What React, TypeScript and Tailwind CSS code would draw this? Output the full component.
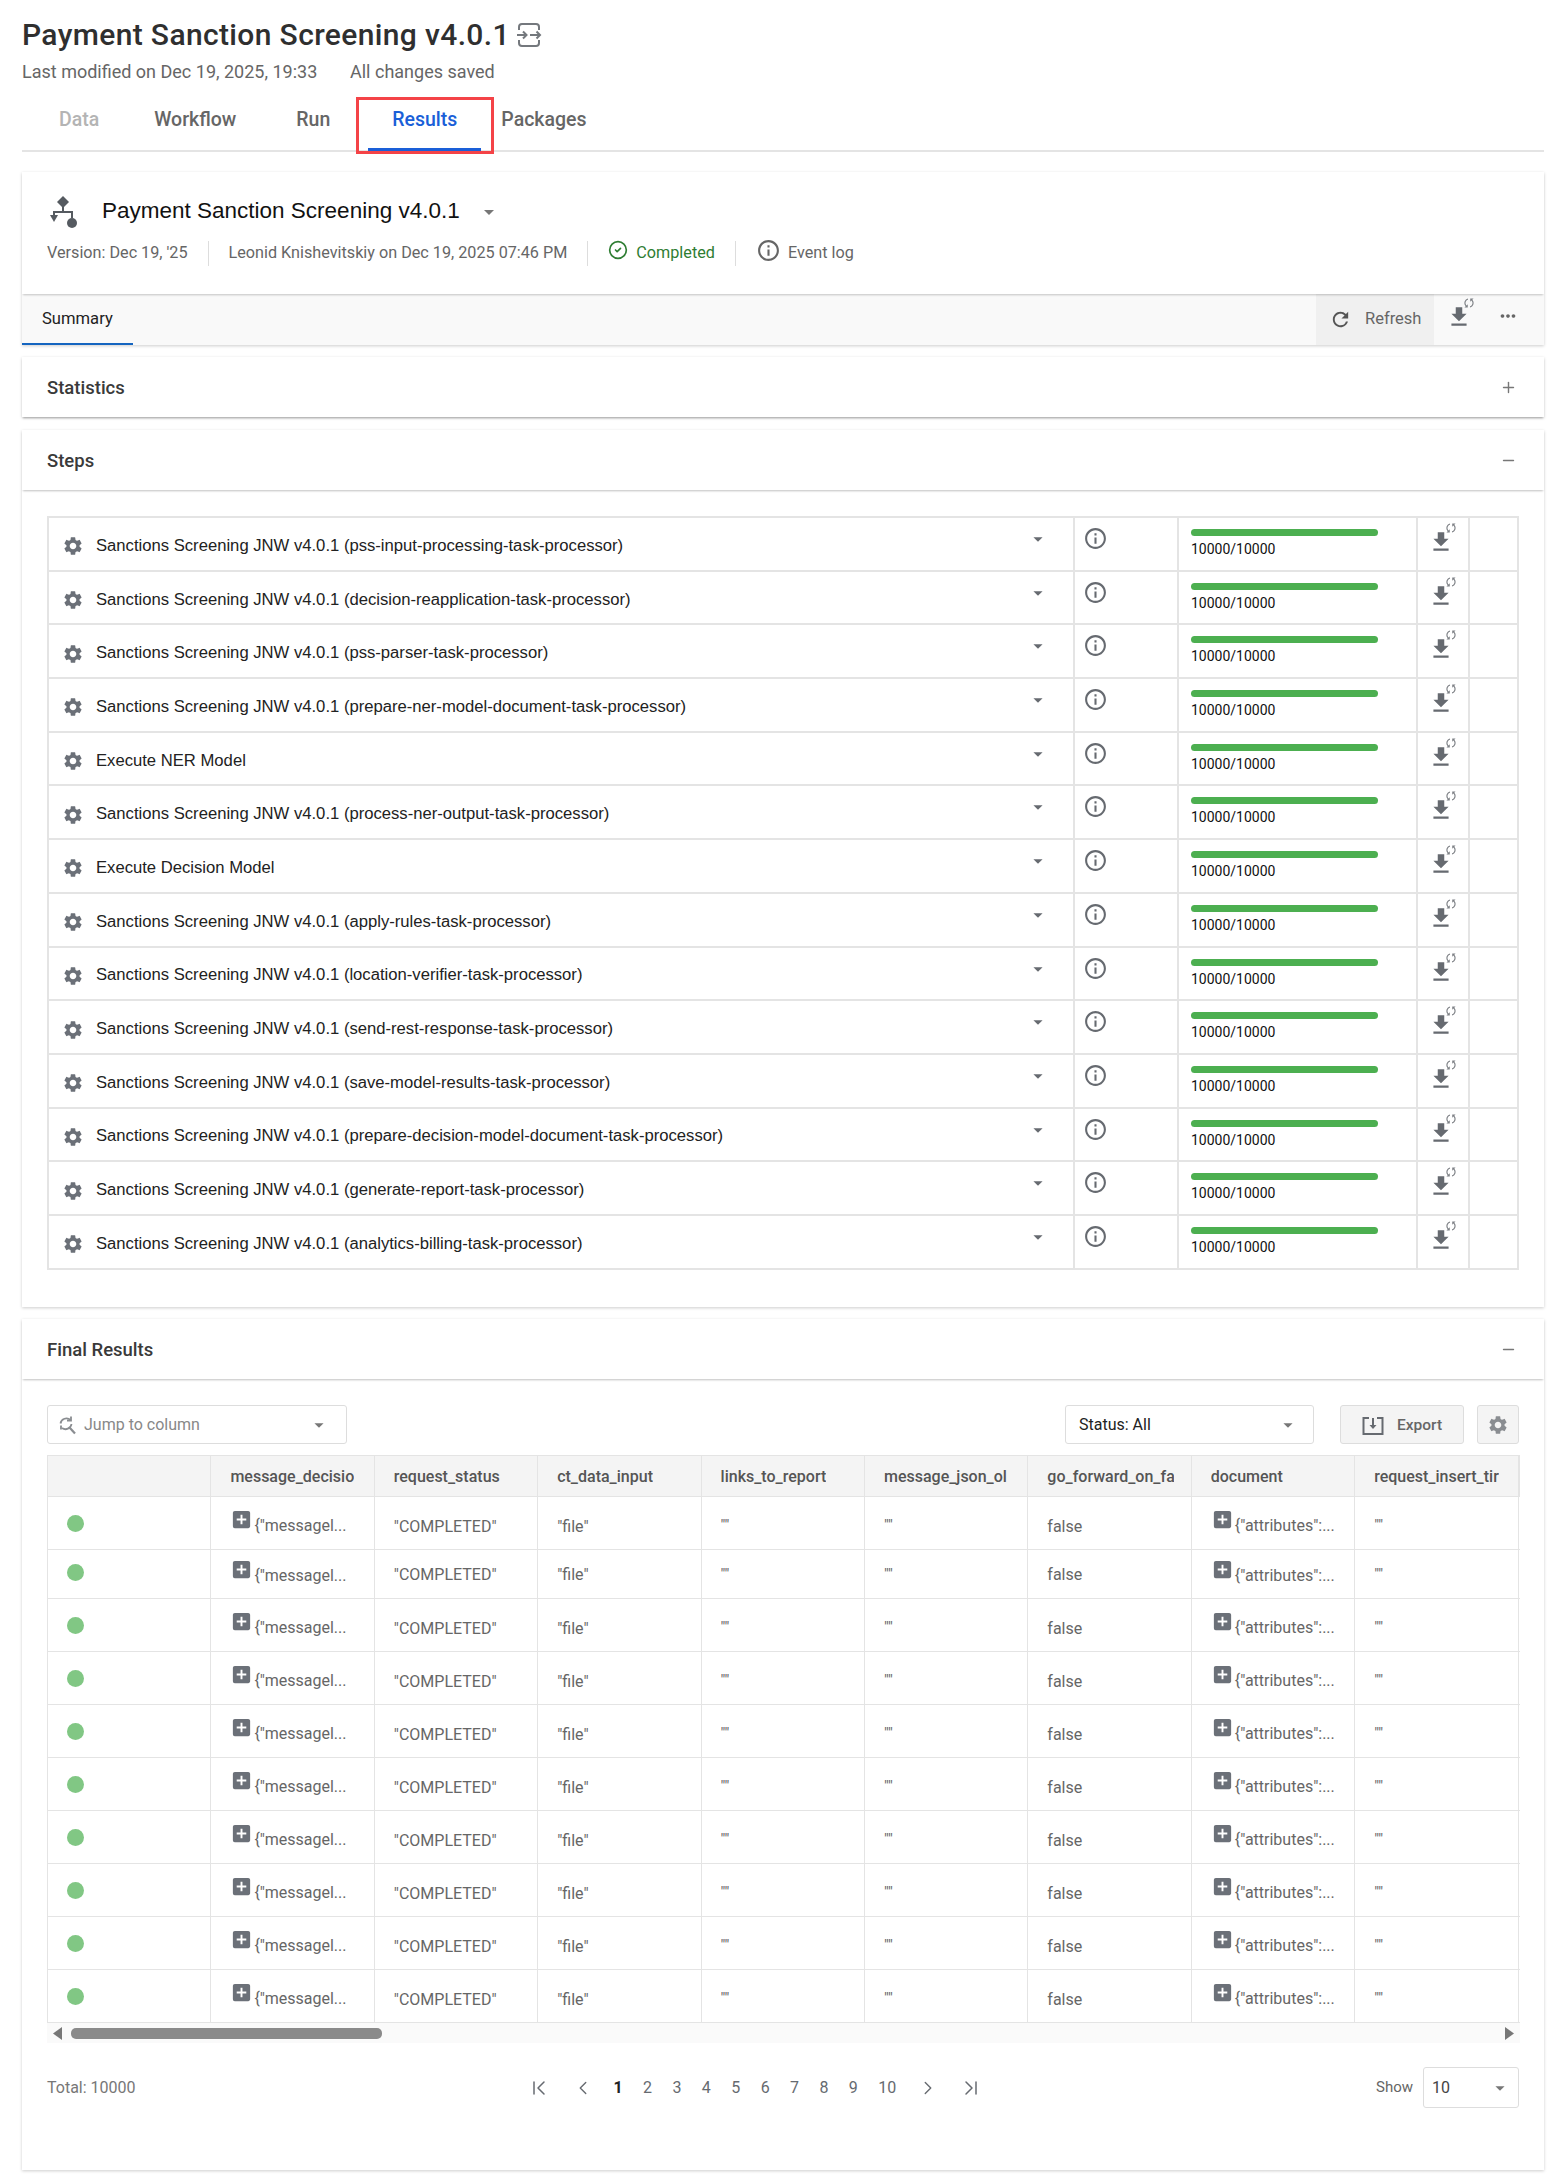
import React from 'react';
import { MdSettings, MdInfoOutline, MdRefresh, MdFileDownload, MdSync, MdMoreHoriz, MdArrowDropDown, MdAddBox } from 'react-icons/md';
import { Plus, Minus, ChevronLeft, ChevronRight, ChevronFirst, ChevronLast, CircleCheck } from 'lucide-react';

const steps = [
  'Sanctions Screening JNW v4.0.1 (pss-input-processing-task-processor)',
  'Sanctions Screening JNW v4.0.1 (decision-reapplication-task-processor)',
  'Sanctions Screening JNW v4.0.1 (pss-parser-task-processor)',
  'Sanctions Screening JNW v4.0.1 (prepare-ner-model-document-task-processor)',
  'Execute NER Model',
  'Sanctions Screening JNW v4.0.1 (process-ner-output-task-processor)',
  'Execute Decision Model',
  'Sanctions Screening JNW v4.0.1 (apply-rules-task-processor)',
  'Sanctions Screening JNW v4.0.1 (location-verifier-task-processor)',
  'Sanctions Screening JNW v4.0.1 (send-rest-response-task-processor)',
  'Sanctions Screening JNW v4.0.1 (save-model-results-task-processor)',
  'Sanctions Screening JNW v4.0.1 (prepare-decision-model-document-task-processor)',
  'Sanctions Screening JNW v4.0.1 (generate-report-task-processor)',
  'Sanctions Screening JNW v4.0.1 (analytics-billing-task-processor)',
];

const columns = ['', 'message_decisio', 'request_status', 'ct_data_input', 'links_to_report', 'message_json_ol', 'go_forward_on_fa', 'document', 'request_insert_tir'];

const rowHeights = ['h-[53px]', 'h-[49px]', 'h-[53px]', 'h-[53px]', 'h-[53px]', 'h-[53px]', 'h-[53px]', 'h-[53px]', 'h-[53px]', 'h-[53px]'];

// second row of the grid sits a little tighter in the original
const normalPads = { dot: 'pt-[18px]', icon: 'pt-[11px]', text: 'pt-[18px]', empty: 'pt-[17px]' };
const tightPads = { dot: 'pt-[14px]', icon: 'pt-[8px]', text: 'pt-[13px]', empty: 'pt-[13px]' };

const DownloadSync = () => (
  <span className="relative block w-[30px] h-[34px] text-[#666a70]">
    <MdFileDownload size={26} className="absolute left-0 top-[8px]" />
    <MdSync size={14} className="absolute left-[16px] top-0 rotate-45 text-[#7d8085]" />
  </span>
);

const WorkflowIcon = () => (
  <svg width="30" height="35" viewBox="0 0 30 35" fill="#555a60" className="ml-px shrink-0">
    <path d="M15 1l6 6-6 6-6-6z" />
    <path d="M14 12h2v4h9v7h-2v-5H7v3H5v-5h9z" />
    <path d="M2 20h8l-4 7z" />
    <circle cx="24" cy="28" r="5" />
  </svg>
);

const MappingIcon = () => (
  <svg width="26" height="26" viewBox="0 0 26 26" fill="none" stroke="#74787d" strokeWidth="2">
    <path d="M3 8V5a3 3 0 0 1 3-3h14a3 3 0 0 1 3 3v3" />
    <path d="M3 18v3a3 3 0 0 0 3 3h14a3 3 0 0 0 3-3v-3" />
    <path d="M1 13h9M7 9.500l3.500 3.500L7 16.500M14 13h10M20.500 9.500l3.500 3.500-3.500 3.500" />
  </svg>
);

const JumpIcon = () => (
  <svg width="19" height="20" viewBox="0 0 19 20" fill="none" stroke="#8a8d91" strokeWidth="1.800">
    <path d="M2.500 8.500a6 6 0 0 1 10-3.500M13.500 9a6 6 0 0 1-9.500 4" />
    <path d="M13 1.500v4H9M3 14.500v-4" />
    <path d="M11.500 12.500l5.500 6" strokeWidth="2.200" />
  </svg>
);

const ExportIcon = () => (
  <svg width="22" height="18" viewBox="0 0 22 18" fill="none" stroke="#666a70" strokeWidth="2">
    <path d="M7 1H1.500v16h19V1H15" />
    <path d="M11 1v10" />
    <path d="M7.500 8l3.500 4 3.500-4z" fill="#666a70" stroke="none" />
  </svg>
);

const ScrollArrow = ({ flip }: { flip?: boolean }) => (
  <svg width="10" height="13" viewBox="0 0 10 13" fill="#777" className={flip ? 'rotate-180' : ''}>
    <path d="M9 0v13L0 6.500z" />
  </svg>
);

const SectionHeader = ({ title, open }: { title: string; open: boolean }) => (
  <div className="h-[60px] flex items-center justify-between pl-[25px] pr-[27px] shadow-[0_2px_2px_-1px_rgba(0,0,0,0.25)] relative">
    <span className="mt-[3px] text-[18.5px] font-medium text-[#3a3a3a]">{title}</span>
    {open ? <Minus size={17} className="text-[#777]" /> : <Plus size={17} className="text-[#777]" />}
  </div>
);

const App: React.FC = () => {
  return (
    <div className="w-[1554px] h-[2178px] bg-white pl-[22px] pr-[10px] font-['Roboto',sans-serif] overflow-hidden">
      {/* Page title */}
      <div className="h-[60px] pt-[10px] flex items-center gap-[6px]">
        <span className="text-[30px] leading-[36px] tracking-[0.36px] font-medium text-[#2f2f2f]">Payment Sanction Screening v4.0.1</span>
        <MappingIcon />
      </div>
      <div className="flex text-[18px] leading-[24px] text-[#666] h-[24px]">
        <span className="w-[328px]">Last modified on Dec 19, 2025, 19:33</span>
        <span>All changes saved</span>
      </div>

      {/* Top tabs */}
      <div className="relative h-[68px] border-b-2 border-[#e4e4e4] flex text-[19.5px] font-medium text-[#666]">
        <span className="ml-[37px] mt-[21px] text-[#b4b4b4]">Data</span>
        <span className="ml-[55px] mt-[21px]">Workflow</span>
        <span className="ml-[60px] mt-[21px]">Run</span>
        <span className="ml-[38px] h-[67px] w-[113px] text-center pt-[21px] border-b-[3px] border-[#1a5fd8] text-[#1a5fd8]">Results</span>
        <span className="ml-[20px] mt-[21px]">Packages</span>
        <div className="absolute left-[334px] top-[13px] w-[138px] h-[57px] border-[3px] border-[#f44347]" />
      </div>

      {/* Run card */}
      <div className="mt-[20px] shadow-[0_1px_3px_rgba(0,0,0,0.2)]">
        <div className="h-[122px] px-[25px] pt-[25px] relative shadow-[0_2px_2px_-1px_rgba(0,0,0,0.22)]">
          <div className="flex items-center h-[30px]">
            <WorkflowIcon />
            <span className="ml-[24px] mb-[2px] text-[22.500px] font-['Liberation_Sans',sans-serif] text-[#111]">Payment Sanction Screening v4.0.1</span>
            <MdArrowDropDown size={24} className="ml-[17px] text-[#777]" />
          </div>
          <div className="mt-[13px] flex items-center h-[26px] text-[16.200px] text-[#666]">
            <span>Version: Dec 19, '25</span>
            <span className="mx-[20px] w-px h-[25px] bg-[#ddd]" />
            <span>Leonid Knishevitskiy on Dec 19, 2025 07:46 PM</span>
            <span className="mx-[20px] w-px h-[25px] bg-[#ddd]" />
            <CircleCheck size={20} className="text-[#2e7d32] mt-[-6px]" />
            <span className="ml-[8px] text-[#2e7d32]">Completed</span>
            <span className="mx-[20px] w-px h-[25px] bg-[#ddd]" />
            <MdInfoOutline size={25} className="text-[#666] mt-[-6px]" />
            <span className="ml-[7px]">Event log</span>
          </div>
        </div>
        <div className="h-[51px] bg-[#f9f9f9] flex">
          <div className="w-[111px] h-[51px] pl-[20px] pt-[13px] border-b-2 border-[#1565c0] text-[16.600px] text-[#222]">Summary</div>
          <div className="ml-auto w-[118px] bg-[#f0f0f0] flex items-center pl-[13px] text-[16.500px] text-[#666]">
            <MdRefresh size={23} className="text-[#555]" />
            <span className="ml-[13px]">Refresh</span>
          </div>
          <div className="ml-[12px] mt-[2px]"><DownloadSync /></div>
          <MdMoreHoriz size={22} className="ml-[21px] mt-[11px] text-[#666]" />
          <div className="w-[25px]" />
        </div>
      </div>

      {/* Statistics */}
      <div className="mt-[12px] shadow-[0_1px_3px_rgba(0,0,0,0.2)]">
        <SectionHeader title="Statistics" open={false} />
      </div>

      {/* Steps */}
      <div className="mt-[13px] h-[877px] shadow-[0_1px_3px_rgba(0,0,0,0.2)]">
        <SectionHeader title="Steps" open />
        <div className="mx-[25px] mt-[26px] border-t-2 border-[#e4e4e4] border-l-2 border-r-2">
          {steps.map((step, i) => (
            <div key={i} className="h-[53.7px] flex border-b-2 border-[#e4e4e4] box-border text-[#111]">
              <div className="w-[1024px] flex items-center pl-[13px] pt-[5px] relative">
                <MdSettings size={22} className="text-[#6b7078]" />
                <span className="ml-[12px] text-[16.650px] font-['Liberation_Sans',sans-serif] text-[#222]">{step}</span>
                <MdArrowDropDown size={22} className="absolute left-[978px] top-[10px] text-[#666a70]" />
              </div>
              <div className="w-[104px] border-l-2 border-[#e4e4e4] pl-[8px] pt-[8px]">
                <MdInfoOutline size={25} className="text-[#666a70]" />
              </div>
              <div className="w-[239px] border-l-2 border-[#e4e4e4] pl-[12px] pt-[11px]">
                <div className="w-[187px] h-[7px] rounded-full bg-[#4caf50]" />
                <div className="mt-[3px] text-[14px] leading-[20px] text-[#111]">10000/10000</div>
              </div>
              <div className="w-[52px] border-l-2 border-[#e4e4e4] pl-[10px] pt-[3px]">
                <DownloadSync />
              </div>
              <div className="flex-1 border-l-2 border-[#e4e4e4]" />
            </div>
          ))}
        </div>
      </div>

      {/* Final results */}
      <div className="mt-[12px] h-[851px] shadow-[0_1px_3px_rgba(0,0,0,0.2)]">
        <SectionHeader title="Final Results" open />
        <div className="mx-[25px] mt-[26px] h-[39px] flex">
          <div className="w-[300px] border border-[#ddd] rounded-[3px] flex items-center pl-[10px] pr-[16px] text-[16px] text-[#888]">
            <JumpIcon />
            <span className="ml-[7px]">Jump to column</span>
            <MdArrowDropDown size={22} className="ml-auto text-[#777]" />
          </div>
          <div className="ml-auto w-[249px] border border-[#ddd] rounded-[3px] flex items-center pl-[13px] pr-[14px] text-[16px] text-[#222]">
            <span>Status: All</span>
            <MdArrowDropDown size={22} className="ml-auto text-[#777]" />
          </div>
          <div className="ml-[26px] w-[124px] bg-[#f4f4f4] border border-[#ddd] rounded-[3px] flex items-center pl-[21px] pt-[2px] text-[15.500px] font-medium text-[#666]">
            <ExportIcon />
            <span className="ml-[13px]">Export</span>
          </div>
          <div className="ml-[13px] w-[42px] bg-[#f4f4f4] border border-[#ddd] rounded-[3px] flex items-center justify-center">
            <MdSettings size={22} className="text-[#8a8d91]" />
          </div>
        </div>
        <div className="ml-[25px] mr-[24px] mt-[11px]">
          <div className="h-[41px] flex bg-[#f4f4f4] border border-b-0 border-[#e4e4e4]">
            {columns.map((col, i) => (
              <div key={i} className="w-[163.4px] shrink-0 border-r border-[#e4e4e4] pl-[19px] pr-[17px] pt-[2px] flex items-center overflow-hidden whitespace-nowrap text-[16px] font-medium text-[#555]">
                <span className="overflow-hidden">{col}</span>
              </div>
            ))}
          </div>
          {rowHeights.map((h, r) => {
            const pads = r === 1 ? tightPads : normalPads;
            return (
              <div key={r} className={`${h} flex border-t border-l border-[#e4e4e4] text-[16px] text-[#666]`}>
                <div className={`w-[163.4px] shrink-0 border-r border-[#e4e4e4] pl-[19px] ${pads.dot}`}>
                  <div className="w-[17px] h-[17px] rounded-full bg-[#81c784]" />
                </div>
                <div className={`w-[163.4px] shrink-0 border-r border-[#e4e4e4] pl-[20px] flex ${pads.icon}`}>
                  <MdAddBox size={23} className="text-[#6b7078] ml-[-1px] shrink-0" />
                  <span className="ml-[1px] mt-[6px] whitespace-nowrap">{'{"messagel...'}</span>
                </div>
                <div className={`w-[163.4px] shrink-0 border-r border-[#e4e4e4] pl-[19px] ${pads.text}`}>"COMPLETED"</div>
                <div className={`w-[163.4px] shrink-0 border-r border-[#e4e4e4] pl-[19px] ${pads.text}`}>"file"</div>
                <div className={`w-[163.4px] shrink-0 border-r border-[#e4e4e4] pl-[19px] text-[15px] ${pads.empty}`}>""</div>
                <div className={`w-[163.4px] shrink-0 border-r border-[#e4e4e4] pl-[19px] text-[15px] ${pads.empty}`}>""</div>
                <div className={`w-[163.4px] shrink-0 border-r border-[#e4e4e4] pl-[19px] ${pads.text}`}>false</div>
                <div className={`w-[163.4px] shrink-0 border-r border-[#e4e4e4] pl-[20px] flex ${pads.icon}`}>
                  <MdAddBox size={23} className="text-[#6b7078] ml-[-1px] shrink-0" />
                  <span className="ml-[1px] mt-[6px] whitespace-nowrap">{'{"attributes":...'}</span>
                </div>
                <div className={`w-[163.4px] shrink-0 border-r border-[#e4e4e4] pl-[19px] text-[15px] ${pads.empty}`}>""</div>
              </div>
            );
          })}
          {/* Horizontal scrollbar */}
          <div className="h-[21px] bg-[#fafafa] border-t border-[#e4e4e4] flex items-center relative px-[6px]">
            <ScrollArrow />
            <div className="absolute left-[24px] top-[5px] w-[311px] h-[11px] rounded-[5px] bg-[#8a8a8a]" />
            <span className="ml-auto"><ScrollArrow flip /></span>
          </div>
        </div>

        {/* Footer */}
        <div className="mx-[25px] mt-[24px] h-[41px] flex items-center text-[16px] text-[#777]">
          <span className="w-[480px]">Total: 10000</span>
          <div className="flex items-center text-[#666a70]">
            <ChevronFirst size={24} strokeWidth={1.5} />
            <ChevronLeft size={22} strokeWidth={1.5} className="ml-[21px]" />
            <div className="ml-[19.500px] flex w-[290px] gap-[20.400px]">
              {[1, 2, 3, 4, 5, 6, 7, 8, 9, 10].map((n) => (
                <span key={n} className={n === 1 ? 'font-bold text-[#222]' : ''}>{n}</span>
              ))}
            </div>
            <ChevronRight size={22} strokeWidth={1.5} className="ml-[13.500px]" />
            <ChevronLast size={24} strokeWidth={1.5} className="ml-[20px]" />
          </div>
          <span className="ml-auto text-[15px] text-[#666]">Show</span>
          <div className="ml-[10px] w-[96px] h-[41px] border border-[#ddd] rounded-[3px] flex items-center pl-[8px] pr-[7px] text-[16px] text-[#444]">
            <span>10</span>
            <MdArrowDropDown size={22} className="ml-auto text-[#777]" />
          </div>
        </div>
      </div>
    </div>
  );
};

export default App;
